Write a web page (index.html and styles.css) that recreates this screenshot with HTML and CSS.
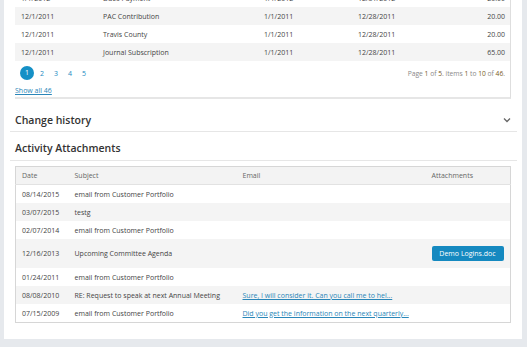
FILE: index.html
```html
<!DOCTYPE html>
<html lang="en">
<head>
    <meta charset="UTF-8">
    <title>Activity</title>
    <link rel="stylesheet" href="styles.css">
</head>
<body>
    <div class="page">
        <div class="panel">
            <div class="box">
                <table class="grid dues">
                    <colgroup>
                        <col style="width:82px"><col style="width:161px"><col style="width:94px"><col style="width:80px"><col>
                    </colgroup>
                    <tr><td>1/1/2012</td><td>Dues Payment</td><td>1/1/2012</td><td>12/31/2012</td><td class="num">20.00</td></tr>
                    <tr class="alt"><td>12/1/2011</td><td>PAC Contribution</td><td>1/1/2011</td><td>12/28/2011</td><td class="num">20.00</td></tr>
                    <tr><td>12/1/2011</td><td>Travis County</td><td>1/1/2011</td><td>12/28/2011</td><td class="num">20.00</td></tr>
                    <tr class="alt"><td>12/1/2011</td><td>Journal Subscription</td><td>1/1/2011</td><td>12/28/2011</td><td class="num">65.00</td></tr>
                </table>
                <div class="pager">
                    <div class="pages">
                        <a class="page-num current">1</a>
                        <a class="page-num">2</a>
                        <a class="page-num">3</a>
                        <a class="page-num">4</a>
                        <a class="page-num">5</a>
                    </div>
                    <div class="pager-info">Page <b>1</b> of <b>5</b>. items <b>1</b> to <b>10</b> of <b>46</b>.</div>
                </div>
                <a class="show-all" href="#">Show all 46</a>
            </div>

            <div class="heading collapsible">
                <span>Change history</span>
                <svg width="8" height="6" viewBox="0 0 8 6"><polyline points="1,1.5 4,4.5 7,1.5" fill="none" stroke="#666" stroke-width="1.3"/></svg>
            </div>

            <div class="heading second"><span>Activity Attachments</span></div>

            <table class="grid attachments">
                <colgroup>
                    <col style="width:53px"><col style="width:168px"><col style="width:189px"><col>
                </colgroup>
                <tr class="head"><th>Date</th><th>Subject</th><th>Email</th><th>Attachments</th></tr>
                <tr><td>08/14/2015</td><td>email from Customer Portfolio</td><td></td><td></td></tr>
                <tr class="alt"><td>03/07/2015</td><td>testg</td><td></td><td></td></tr>
                <tr><td>02/07/2014</td><td>email from Customer Portfolio</td><td></td><td></td></tr>
                <tr class="alt tall"><td>12/16/2013</td><td>Upcoming Committee Agenda</td><td></td><td><a class="file-btn" href="#">Demo Logins.doc</a></td></tr>
                <tr><td>01/24/2011</td><td>email from Customer Portfolio</td><td></td><td></td></tr>
                <tr class="alt"><td>08/08/2010</td><td>RE: Request to speak at next Annual Meeting</td><td><a href="#">Sure, I will consider it. Can you call me to hel...</a></td><td></td></tr>
                <tr><td>07/15/2009</td><td>email from Customer Portfolio</td><td><a href="#">Did you get the information on the next quarterly...</a></td><td></td></tr>
            </table>
        </div>
    </div>
</body>
</html>
```

FILE: styles.css
```css
body {
    margin: 0;
    background-color: #e6e9ed;
    font-family: "Open Sans", Arial, sans-serif;
    color: #444;
    overflow: hidden;
}
.page {
    margin-top: -11px;
    padding: 0 5px 0 4px;
}
.panel {
    background-color: white;
    padding: 0 5px 16px 6px;
}
.box {
    margin: 0 6px 0 5px;
    border-right: 1px solid #dedede;
    border-bottom: 2px solid #e6e6e6;
}
.grid {
    width: 100%;
    border-collapse: collapse;
    table-layout: fixed;
    font-size: 7px;
}
.grid td, .grid th {
    height: 18px;
    padding: 0 0 0 6px;
    text-align: left;
    font-weight: normal;
    white-space: nowrap;
    overflow: hidden;
}
.grid .alt td {
    background-color: #f4f4f4;
}
.grid .num {
    text-align: right;
    padding-right: 5px;
    color: #444;
}
.pager {
    display: flex;
    justify-content: space-between;
    align-items: center;
    height: 24px;
    padding: 0 5px 0 5px;
}
.pages {
    display: flex;
    align-items: center;
    gap: 2px;
}
.page-num {
    width: 12px;
    text-align: center;
    font-size: 7px;
    color: #1b8bc2;
}
.page-num.current {
    width: 14px;
    height: 14px;
    line-height: 14px;
    border-radius: 50%;
    background-color: #1590c6;
    color: white;
}
.pager-info {
    font-size: 6.7px;
    color: #888;
}
.pager-info b {
    font-weight: normal;
    color: #7a5a22;
}
.show-all {
    display: block;
    height: 12px;
    line-height: 12px;
    font-size: 7px;
    color: #2a86b8;
}
.heading {
    display: flex;
    justify-content: space-between;
    align-items: center;
    margin-top: 13px;
    padding: 0 6px 3px 5px;
    line-height: 16px;
    font-size: 10.5px;
    font-weight: 600;
    color: #333;
    border-bottom: 1px solid #e6e6e6;
}
.heading.second {
    margin-top: 8px;
    padding-bottom: 4px;
}
.attachments {
    margin: 5px 6px 0 5px;
    width: calc(100% - 11px);
    border: 1px solid #d6d6d6;
}
.attachments .head th {
    height: 17px;
    background-color: #f3f3f3;
    color: #666;
    border-bottom: 1px solid #e2e2e2;
}
.attachments .tall td {
    height: 29px;
}
.attachments a {
    color: #2a86b8;
}
.attachments .file-btn {
    display: inline-block;
    width: 72px;
    height: 15px;
    line-height: 15px;
    text-align: center;
    border-radius: 2px;
    background-color: #1589c0;
    color: white;
    text-decoration: none;
}
```
